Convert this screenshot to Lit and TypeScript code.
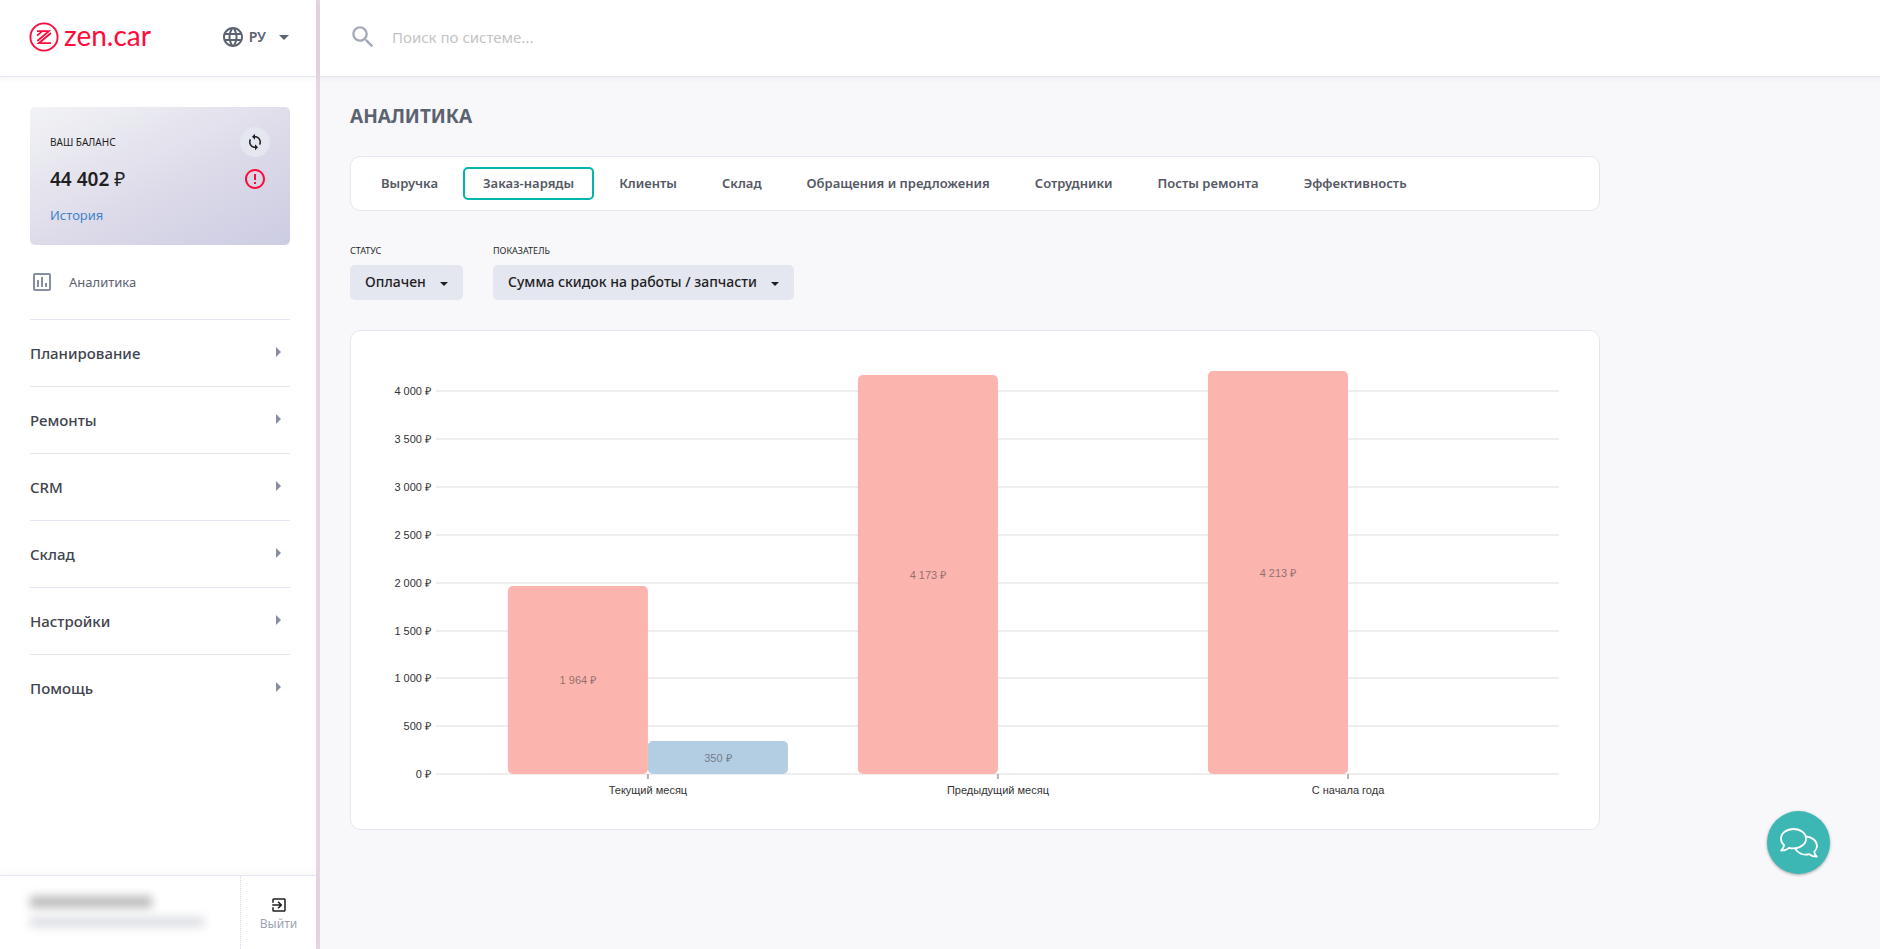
import { LitElement, html, css, svg, nothing } from "lit";
import { customElement, state } from "lit/decorators.js";
import { classMap } from "lit/directives/class-map.js";

const SECTIONS = ["Планирование", "Ремонты", "CRM", "Склад", "Настройки", "Помощь"];

const TABS = [
  "Выручка",
  "Заказ-наряды",
  "Клиенты",
  "Склад",
  "Обращения и предложения",
  "Сотрудники",
  "Посты ремонта",
  "Эффективность",
];

interface Group {
  name: string;
  works: number;
  parts: number;
}

const GROUPS: Group[] = [
  { name: "Текущий месяц", works: 1964, parts: 350 },
  { name: "Предыдущий месяц", works: 4173, parts: 0 },
  { name: "С начала года", works: 4213, parts: 0 },
];

const rub = (n: number) => `${String(n).replace(/\B(?=(\d{3})+$)/g, "\u00a0")} ₽`;

@customElement("discount-chart")
export class DiscountChart extends LitElement {
  static styles = css`
    :host {
      display: block;
      padding: 40px 40px 54px 85px;
    }
    .plot {
      display: block;
      width: 100%;
      height: 404px;
      overflow: visible;
      font: 11px "Liberation Sans", Arial, sans-serif;
      fill: #333;
    }
    .line {
      stroke: #eee;
      stroke-width: 2;
    }
    .tick {
      stroke: #b5b5b5;
      stroke-width: 2;
    }
    .works {
      fill: #fbb4ae;
    }
    .parts {
      fill: #b3cde3;
    }
    .value {
      fill-opacity: 0.55;
    }
  `;

  private base = 403.2;
  private unit = 383 / 4000;
  private edge = 6.4;
  private step = 31.17;
  private bar = 12.47;

  private y(value: number) {
    return Math.round(this.base - value * this.unit);
  }

  private drawBar(x: number, value: number, kind: string) {
    if (!value) return nothing;
    const top = this.y(value);
    const bottom = this.y(0);
    const middle = Math.round((top + bottom) / 2);
    return svg`
      <rect class=${kind} x="${x}%" y=${top} width="${this.bar}%" height=${bottom - top} rx="5"></rect>
      <text class="value" x="${x + this.bar / 2}%" y=${middle + 4} text-anchor="middle">${rub(value)}</text>`;
  }

  render() {
    const ticks = Array.from({ length: 9 }, (_, i) => i * 500);
    const bottom = this.y(0);
    return html`
      <svg class="plot" role="img" aria-label="Сумма скидок на работы / запчасти">
        ${ticks.map(
          (t) => svg`
            <line class="line" x1="0" x2="100%" y1=${this.y(t)} y2=${this.y(t)}></line>
            <text x="-5" y=${this.y(t) + 4} text-anchor="end">${rub(t)}</text>`
        )}
        ${GROUPS.map((g, i) => {
          const x = this.edge + i * this.step;
          const mid = x + this.bar;
          return svg`
            <line class="tick" x1="${mid}%" x2="${mid}%" y1=${bottom} y2=${bottom + 5}></line>
            ${this.drawBar(x, g.works, "works")}
            ${this.drawBar(mid, g.parts, "parts")}
            <text x="${mid}%" y=${bottom + 20} text-anchor="middle">${g.name}</text>`;
        })}
      </svg>
    `;
  }
}

@customElement("app-root")
export class AppRoot extends LitElement {
  static styles = css`
    :host {
      display: grid;
      grid-template-columns: 320px 1fr;
      min-height: 100vh;
      background: #f8f8fb;
      color: #1f1f1f;
      font-family: "Noto Sans", "Open Sans", sans-serif;
      font-size: 13px;
      line-height: 20px;
    }
    * {
      box-sizing: border-box;
    }
    a {
      color: inherit;
      text-decoration: none;
    }
    button,
    input,
    select {
      font: inherit;
      color: inherit;
      margin: 0;
      border: 0;
      background: none;
    }
    button {
      padding: 0;
      cursor: pointer;
    }
    svg {
      display: block;
      fill: currentColor;
    }
    .outline {
      fill: none;
      stroke: currentColor;
    }

    .side {
      display: flex;
      flex-direction: column;
      background: #fff;
      border-right: 4px solid #e6d6e2;
    }
    .bar {
      display: flex;
      align-items: center;
      height: 77px;
      padding-bottom: 2px;
      background: #fff;
      border-bottom: 1px solid #e4e6f0;
      box-shadow: 0 2px 6px rgba(30, 30, 60, 0.04);
    }
    .brand {
      justify-content: space-between;
      padding-left: 29px;
      padding-right: 23px;
    }
    .logo {
      display: flex;
      align-items: center;
      gap: 5px;
      color: #ff0a3c;
      font: 28px/30px Lato, sans-serif;
    }
    .logo span {
      padding-bottom: 4px;
    }
    .lang {
      display: flex;
      align-items: center;
      gap: 6px;
      color: #5c6370;
      font-size: 14px;
      font-weight: 600;
    }
    .lang .caret {
      margin-left: 3px;
    }

    .balance {
      display: grid;
      grid-template-columns: 1fr auto;
      align-items: center;
      margin: 30px 26px 0 30px;
      padding: 20px 20px 15px;
      border-radius: 5px;
      background: linear-gradient(155deg, #f2f3f6 0%, #dddbe9 55%, #cccce3 100%);
    }
    .caption {
      font-size: 10px;
      line-height: 14px;
      text-transform: uppercase;
    }
    .refresh {
      display: grid;
      place-items: center;
      width: 30px;
      height: 30px;
      border-radius: 50%;
      background: #e4e6f0;
    }
    .sum {
      font-size: 19px;
      font-weight: 600;
      line-height: 44px;
    }
    .sum small {
      font-size: inherit;
      font-weight: 400;
    }
    .warn {
      justify-self: center;
      color: #ff0a3c;
    }
    .history {
      color: #3f82c8;
      line-height: 29px;
    }

    .current {
      display: flex;
      align-items: center;
      gap: 15px;
      margin: 0 26px 0 30px;
      height: 74px;
      color: #5c6370;
    }
    .current svg {
      color: #868e9f;
    }
    .menu {
      flex: 1;
      margin: 0 26px 0 30px;
    }
    .section {
      display: flex;
      align-items: center;
      justify-content: space-between;
      width: 100%;
      height: 67px;
      padding-right: 9px;
      border-top: 1px solid #e4e6f0;
      color: #40444e;
      font-size: 15px;
      font-weight: 500;
    }
    .section svg {
      color: #868e9f;
    }
    .foot {
      display: grid;
      grid-template-columns: 241px 1fr;
      height: 74px;
      border-top: 1px solid #e4e6f5;
      box-shadow: 0 -2px 8px rgba(30, 30, 60, 0.04);
    }
    .user {
      display: flex;
      flex-direction: column;
      gap: 9px;
      padding: 20px 30px;
      border-right: 1px dotted #d4d6ea;
    }
    .user i {
      display: block;
      width: 122px;
      height: 12px;
      background: #bbb;
      filter: blur(5px);
    }
    .user i + i {
      width: 174px;
      height: 10px;
      background: #dcdde3;
    }
    .exit {
      display: flex;
      flex-direction: column;
      align-items: center;
      justify-content: center;
      gap: 1px;
      padding-top: 4px;
      font-size: 12px;
      line-height: 18px;
    }
    .exit span {
      color: #9ea3b2;
    }

    .main {
      display: flex;
      flex-direction: column;
      min-width: 0;
    }
    .search {
      gap: 17px;
      padding-left: 31px;
      padding-right: 30px;
      color: #a4a9b8;
    }
    .search input {
      flex: 1;
      padding: 0;
      outline: 0;
      font-size: 15px;
      color: #333;
    }
    .search input::placeholder {
      color: #c4c4c4;
      opacity: 1;
    }
    .page {
      width: 100%;
      max-width: 1310px;
      padding: 24px 30px;
    }
    h1 {
      margin: 0;
      color: #5c6370;
      font-size: 19px;
      font-weight: 700;
      line-height: 30px;
      text-transform: uppercase;
    }
    .card {
      background: #fff;
      border: 1px solid #e4e6f0;
      border-radius: 10px;
    }
    .tabs {
      display: flex;
      flex-wrap: wrap;
      gap: 5px;
      margin: 25px 0 32px;
      padding: 10px;
    }
    .tab {
      height: 33px;
      padding: 0 18px 2px;
      border: 2px solid transparent;
      border-radius: 5px;
      color: #555964;
      font-weight: 600;
    }
    .tab.on {
      border-color: #00b5ad;
    }
    .filters {
      display: flex;
      flex-wrap: wrap;
      gap: 30px;
      margin-bottom: 30px;
    }
    .filter {
      display: grid;
      gap: 7px;
      padding-top: 1px;
    }
    .filter .caption {
      font-size: 9px;
    }
    .pick {
      display: grid;
      align-items: center;
    }
    .pick > * {
      grid-area: 1 / 1;
    }
    .pick select {
      height: 35px;
      padding: 0 37px 1px 15px;
      border-radius: 5px;
      background: #e4e6f0;
      font-size: 14px;
      font-weight: 500;
      appearance: none;
    }
    .pick svg {
      justify-self: end;
      margin-top: 2px;
      margin-right: 15px;
      pointer-events: none;
    }
    .chat {
      position: fixed;
      right: 50px;
      bottom: 75px;
      display: grid;
      place-items: center;
      width: 63px;
      height: 63px;
      border-radius: 50%;
      background: #3cb7b4;
      color: #fff;
      box-shadow: 0 1px 3px rgba(0, 0, 0, 0.35);
    }
  `;

  @state() private tab = TABS[1];

  private select(id: string, title: string, value: string) {
    return html`
      <div class="filter">
        <label class="caption" for=${id}>${title}</label>
        <div class="pick">
          <select id=${id}>
            <option>${value}</option>
          </select>
          <svg width="8" height="4" viewBox="0 0 8 4"><path d="M0 0h8L4 4z" /></svg>
        </div>
      </div>
    `;
  }

  render() {
    return html`
      <aside class="side">
        <div class="bar brand">
          <a class="logo" href="#">
            <svg class="outline" width="30" height="30" viewBox="0 0 30 30">
              <circle cx="15" cy="15" r="13.600" stroke-width="1.900" />
              <path d="M8 9.200h11.800L8.300 19M22 11 9.800 21.200H22M8 13.600 12.800 9.600" stroke-width="1.800" />
            </svg>
            <span>zen.car</span>
          </a>
          <button class="lang">
            <svg width="20" height="20" viewBox="2 2 20 20">
              <path
                d="M11.990 2C6.470 2 2 6.480 2 12s4.470 10 9.990 10C17.520 22 22 17.520 22 12S17.520 2 11.990 2zm6.930 6h-2.950a15.650 15.650 0 0 0-1.380-3.560A8.030 8.030 0 0 1 18.920 8zM12 4.040c.83 1.200 1.480 2.530 1.910 3.960h-3.820c.43-1.430 1.080-2.760 1.910-3.960zM4.260 14C4.100 13.360 4 12.690 4 12s.1-1.360.26-2h3.380c-.08.66-.14 1.320-.14 2s.06 1.340.14 2H4.260zm.82 2h2.950c.32 1.250.78 2.450 1.380 3.560A7.987 7.987 0 0 1 5.080 16zm2.950-8H5.080a7.987 7.987 0 0 1 4.330-3.560A15.650 15.650 0 0 0 8.030 8zM12 19.960c-.83-1.200-1.480-2.530-1.910-3.960h3.820c-.43 1.430-1.080 2.760-1.910 3.960zM14.340 14H9.660c-.09-.66-.16-1.320-.16-2s.07-1.350.16-2h4.680c.09.65.16 1.320.16 2s-.07 1.340-.16 2zm.25 5.560c.6-1.110 1.060-2.310 1.380-3.560h2.950a8.030 8.030 0 0 1-4.330 3.560zM16.360 14c.08-.66.14-1.320.14-2s-.06-1.340-.14-2h3.380c.16.64.26 1.310.26 2s-.1 1.360-.26 2h-3.380z"
              />
            </svg>
            РУ
            <svg class="caret" width="18" height="10" viewBox="0 0 18 10"><path d="M4 3h10L9 8z" /></svg>
          </button>
        </div>

        <section class="balance">
          <div class="caption">Ваш баланс</div>
          <button class="refresh" aria-label="Обновить баланс">
            <svg width="18" height="18" viewBox="0 0 24 24">
              <path
                d="M12 4V1L8 5l4 4V6c3.310 0 6 2.690 6 6 0 1.010-.25 1.970-.7 2.800l1.460 1.460A7.930 7.930 0 0 0 20 12c0-4.420-3.580-8-8-8zm0 14c-3.310 0-6-2.690-6-6 0-1.010.25-1.970.7-2.800L5.240 7.740A7.930 7.930 0 0 0 4 12c0 4.420 3.580 8 8 8v3l4-4-4-4v3z"
              />
            </svg>
          </button>
          <div class="sum">44 402 <small>₽</small></div>
          <svg class="warn" width="24" height="24" viewBox="0 0 24 24">
            <path
              d="M11 15h2v2h-2zm0-8h2v6h-2zm.99-5C6.470 2 2 6.480 2 12s4.470 10 9.990 10C17.520 22 22 17.520 22 12S17.520 2 11.990 2zM12 20c-4.420 0-8-3.580-8-8s3.580-8 8-8 8 3.580 8 8-3.580 8-8 8z"
            />
          </svg>
          <a class="history" href="#">История</a>
        </section>

        <a class="current" href="#">
          <svg width="24" height="24" viewBox="0 0 24 24">
            <path
              d="M9 17H7v-7h2v7zm4 0h-2V7h2v10zm4 0h-2v-4h2v4zm2 2H5V5h14v14zm0-16H5c-1.100 0-2 .9-2 2v14c0 1.100.9 2 2 2h14c1.100 0 2-.9 2-2V5c0-1.100-.9-2-2-2z"
            />
          </svg>
          Аналитика
        </a>

        <nav class="menu">
          ${SECTIONS.map(
            (name) => html`
              <button class="section">
                ${name}
                <svg width="5" height="12" viewBox="0 0 5 12"><path d="M0 0l5 5-5 5z" /></svg>
              </button>
            `
          )}
        </nav>

        <div class="foot">
          <div class="user"><i></i><i></i></div>
          <button class="exit">
            <svg width="18" height="18" viewBox="0 0 24 24">
              <path
                d="M10.090 15.590 11.500 17l5-5-5-5-1.410 1.410L12.670 11H3v2h9.670l-2.580 2.590zM19 3H5a2 2 0 0 0-2 2v4h2V5h14v14H5v-4H3v4a2 2 0 0 0 2 2h14c1.100 0 2-.9 2-2V5c0-1.100-.9-2-2-2z"
              />
            </svg>
            <span>Выйти</span>
          </button>
        </div>
      </aside>

      <main class="main">
        <div class="bar search">
          <svg width="24" height="24" viewBox="2 2 20 20">
            <path
              d="M15.500 14h-.79l-.28-.27A6.471 6.471 0 0 0 16 9.500 6.500 6.500 0 1 0 9.500 16c1.610 0 3.090-.59 4.230-1.570l.27.28v.79l5 4.990L20.490 19l-4.990-5zm-6 0C7.010 14 5 11.990 5 9.500S7.010 5 9.500 5 14 7.010 14 9.500 11.990 14 9.500 14z"
            />
          </svg>
          <input type="search" placeholder="Поиск по системе..." aria-label="Поиск по системе" />
        </div>

        <div class="page">
          <h1>Аналитика</h1>
          <nav class="card tabs">
            ${TABS.map(
              (t) => html`
                <button class=${classMap({ tab: true, on: t === this.tab })} @click=${() => (this.tab = t)}>${t}</button>
              `
            )}
          </nav>
          <div class="filters">
            ${this.select("status", "Статус", "Оплачен")}
            ${this.select("metric", "Показатель", "Сумма скидок на работы / запчасти")}
          </div>
          <discount-chart class="card"></discount-chart>
        </div>
      </main>

      <button class="chat" aria-label="Чат">
        <svg class="outline" width="40" height="32" viewBox="0 0 40 32" stroke-width="1.800" stroke-linejoin="round">
          <path
            d="M14.500 2C7.500 2 2 6.300 2 11.700c0 2.500 1.200 4.700 3.100 6.400-.3 2.200-1.400 4-3 5.400 3.100.2 6-.8 8.300-2.700 1.300.4 2.700.6 4.100.6 7 0 12.500-4.300 12.500-9.700S21.500 2 14.500 2z"
          />
          <path
            d="M27 9.300c6 .6 11 4.600 11 9.700 0 2.300-1.100 4.200-2.800 5.800.3 2 1.200 3.600 2.600 4.800-2.900.1-5.400-.8-7.500-2.400-5.600 1.500-11.800-.8-14.300-5.800"
          />
        </svg>
      </button>
    `;
  }
}
